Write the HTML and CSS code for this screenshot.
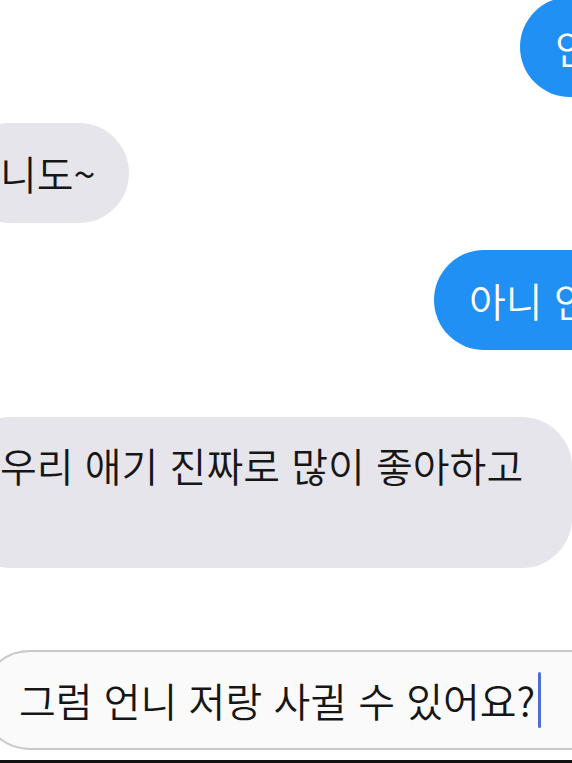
FILE: index.html
```html
<!DOCTYPE html>
<html lang="ko">
<head>
<meta charset="utf-8">
<title>Chat</title>
<link rel="stylesheet" href="styles.css">
</head>
<body>
<div class="chat">
  <div class="row out first">
    <div class="bubble blue">안</div>
  </div>
  <div class="row in second">
    <div class="bubble gray">니도~</div>
  </div>
  <div class="row out third">
    <div class="bubble blue">아니 안</div>
  </div>
  <div class="row in fourth">
    <div class="bubble gray tall">우리 애기 진짜로 많이 좋아하고</div>
  </div>
  <div class="composer">
    <div class="field"><span class="typed">그럼 언니 저랑 사귈 수 있어요?</span><span class="caret"></span></div>
  </div>
  <div class="edge"></div>
</div>
</body>
</html>
```
FILE: styles.css
```css
html, body {
  margin: 0;
  padding: 0;
  background: #ffffff;
}
body {
  width: 572px;
  height: 763px;
  overflow: hidden;
  font-family: "Noto Sans CJK KR", "Noto Sans", sans-serif;
  font-size: 40px;
  font-weight: 350;
  color: #161616;
}
.chat {
  display: flex;
  flex-direction: column;
  height: 763px;
  overflow: hidden;
}
.row {
  display: flex;
  flex-shrink: 0;
}
.bubble {
  box-sizing: border-box;
  height: 100px;
  display: flex;
  align-items: center;
  white-space: nowrap;
  border-radius: 50px;
  flex-shrink: 0;
  line-height: 1;
}
.blue {
  background: #2190f4;
  color: #ffffff;
  padding: 0 80px 0 35px;
}
.gray {
  background: #e6e5eb;
  color: #161616;
  margin-left: -40px;
  padding: 0 33px 0 40px;
}
.first {
  margin-top: -3px;
  padding-left: 520px;
}
.second {
  margin-top: 26px;
}
.third {
  margin-top: 27px;
  padding-left: 434px;
}
.fourth {
  margin-top: 67px;
}
.tall {
  width: 612px;
  height: 151px;
  align-items: flex-start;
  padding: 28px 40px 0 40px;
}
.composer {
  margin-top: 82px;
  display: flex;
  flex-shrink: 0;
}
.field {
  box-sizing: border-box;
  height: 100px;
  width: 640px;
  margin-left: -20px;
  flex-shrink: 0;
  border: 2px solid #c9c9c9;
  border-radius: 50px;
  background: #fafafa;
  display: flex;
  align-items: center;
  padding-left: 37px;
  white-space: nowrap;
  line-height: 1;
}
.caret {
  display: inline-block;
  width: 3px;
  height: 56px;
  margin-left: 3px;
  border-radius: 2px;
  background: #4d6fd5;
}
.edge {
  margin-top: 10px;
  height: 3px;
  background: #111111;
  flex-shrink: 0;
}
```
